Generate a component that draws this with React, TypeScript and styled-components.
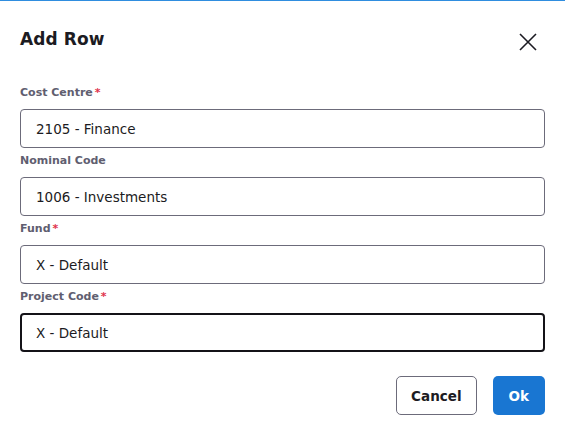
import styled, { createGlobalStyle } from 'styled-components';

const GlobalStyle = createGlobalStyle`
  html, body {
    margin: 0;
    padding: 0;
    background: #ffffff;
  }
  * {
    box-sizing: border-box;
  }
`;

const Dialog = styled.div`
  width: 565px;
  height: 439px;
  border-top: 1px solid #2f8ddf;
  background: #fff;
  font-family: 'DejaVu Sans', 'Open Sans', sans-serif;
  color: #1c1b22;
`;

const Header = styled.div`
  display: flex;
  align-items: flex-start;
  justify-content: space-between;
  padding: 26px 20px 0 20px;
  height: 79px;
`;

const Title = styled.h2`
  margin: 0;
  font-size: 17px;
  font-weight: 600;
  line-height: 24px;
  letter-spacing: 0.1px;
  color: #1c1b22;
`;

const CloseButton = styled.button`
  width: 24px;
  height: 24px;
  padding: 0;
  margin: 3px 5px 0 0;
  border: none;
  background: none;
  cursor: pointer;
  display: flex;
  align-items: center;
  justify-content: center;
`;

const Form = styled.div`
  padding: 0 20px;
  display: flex;
  flex-direction: column;
`;

const Field = styled.div`
  display: flex;
  flex-direction: column;
`;

const Label = styled.label`
  padding-top: 5px;
  margin-bottom: 8px;
  font-size: 11px;
  line-height: 16px;
  font-weight: 600;
  color: #605e70;
`;

const Required = styled.span`
  color: #e0344b;
  margin-left: 2px;
`;

const Input = styled.div<{ $focused?: boolean }>`
  height: 39px;
  display: flex;
  align-items: center;
  border: ${({ $focused }) => ($focused ? '2px solid #141318' : '1px solid #6c6b7a')};
  padding: 0 15px 0 ${({ $focused }) => ($focused ? '14px' : '15px')};
  border-radius: 4px;
  font-size: 13.5px;
  color: #1c1b22;
`;

const Footer = styled.div`
  display: flex;
  justify-content: flex-end;
  gap: 16px;
  padding: 24px 20px 0 20px;
`;

const Button = styled.button<{ $primary?: boolean }>`
  height: 39px;
  padding: 0 ${({ $primary }) => ($primary ? '16px' : '14px')};
  border-radius: 5px;
  font-family: inherit;
  font-size: 13.5px;
  font-weight: 600;
  cursor: pointer;
  border: ${({ $primary }) => ($primary ? 'none' : '1px solid #6c6b7a')};
  background: ${({ $primary }) => ($primary ? '#1976d2' : '#fff')};
  color: ${({ $primary }) => ($primary ? '#fff' : '#1c1b22')};
`;

const fields = [
  { label: 'Cost Centre', value: '2105 - Finance', required: true },
  { label: 'Nominal Code', value: '1006 - Investments', required: false },
  { label: 'Fund', value: 'X - Default', required: true },
  { label: 'Project Code', value: 'X - Default', required: true, focused: true },
];

export default function App() {
  return (
    <>
      <GlobalStyle />
      <Dialog>
        <Header>
          <Title>Add Row</Title>
          <CloseButton aria-label="Close">
            <svg width="20" height="20" viewBox="0 0 20 20" fill="none" stroke="#1c1b22" strokeWidth="1.6">
              <path d="M2 2 L18 18 M18 2 L2 18" />
            </svg>
          </CloseButton>
        </Header>
        <Form>
          {fields.map((f) => (
            <Field key={f.label}>
              <Label>
                {f.label}
                {f.required && <Required>*</Required>}
              </Label>
              <Input $focused={f.focused}>{f.value}</Input>
            </Field>
          ))}
        </Form>
        <Footer>
          <Button>Cancel</Button>
          <Button $primary>Ok</Button>
        </Footer>
      </Dialog>
    </>
  );
}
